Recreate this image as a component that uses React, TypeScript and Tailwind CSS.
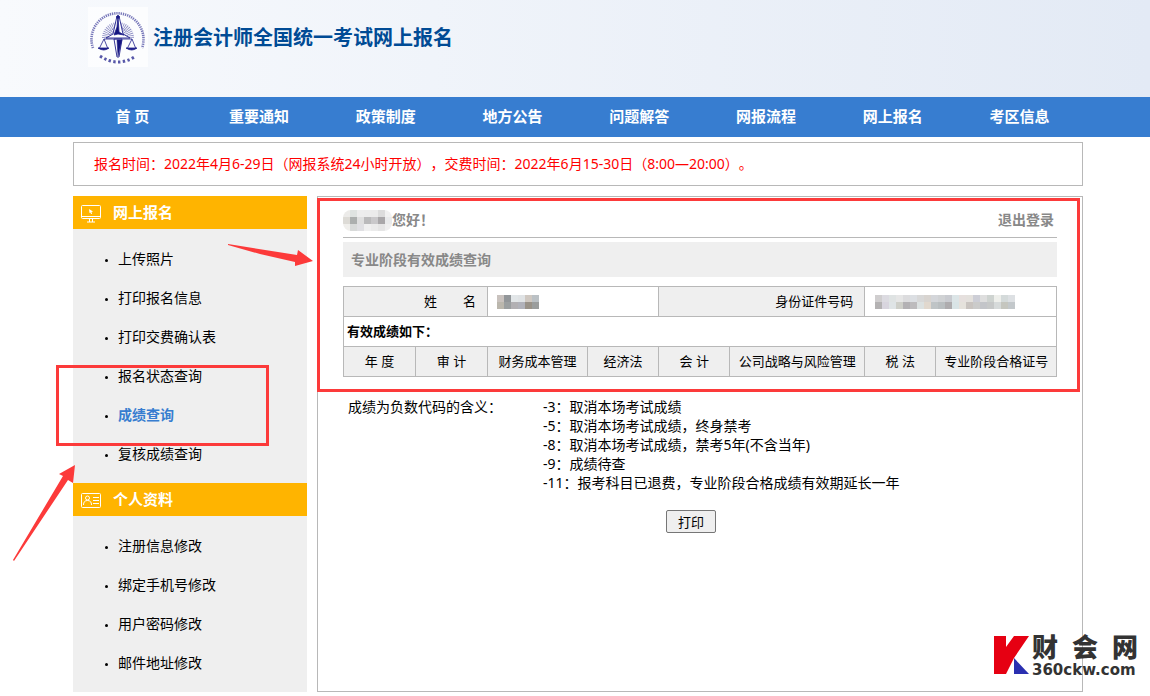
import type { ReactNode } from "react";

const navItems = ["首 页", "重要通知", "政策制度", "地方公告", "问题解答", "网报流程", "网上报名", "考区信息"];

const signUpLinks = ["上传照片", "打印报名信息", "打印交费确认表", "报名状态查询", "成绩查询", "复核成绩查询"];

const profileLinks = ["注册信息修改", "绑定手机号修改", "用户密码修改", "邮件地址修改"];

const subjects = ["年 度", "审 计", "财务成本管理", "经济法", "会 计", "公司战略与风险管理", "税 法", "专业阶段合格证号"];

const scoreCodes = [
  "-3：取消本场考试成绩",
  "-5：取消本场考试成绩，终身禁考",
  "-8：取消本场考试成绩，禁考5年(不含当年)",
  "-9：成绩待查",
  "-11：报考科目已退费，专业阶段合格成绩有效期延长一年",
];

const greetingMosaic = [
  ["#ecebe9", "#dfe3e1", "#ededed", "#ececec", "#ebebeb", "#dcdcdc", "#f1f1f1"],
  ["#dddbd6", "#acafae", "#dfdfdf", "#bababb", "#c9c8ca", "#a9a7a9", "#e9eaeb"],
  ["#f0efec", "#d8dad9", "#e0e0e3", "#f0f0f0", "#ebebeb", "#e5e5e5", "#efefef"],
];

const nameMosaic = [
  ["#c9c2be", "#929699", "#e2e6e8", "#e0e3e5", "#cfc8c1", "#bbc1c5"],
  ["#bbb7ad", "#9b9fa0", "#b2b0b3", "#b1b2ba", "#999288", "#9a9d9d"],
];

const idMosaic = [
  ["#d0cecf", "#dcdbe1", "#dfe3e3", "#e6e6e6", "#dcdcde", "#dcdfe3", "#d8d8d8", "#d8d4d0", "#d4d6da", "#d0d2d4", "#c9cbd0", "#dce5e7", "#e6e0de", "#e4e1dd", "#cdced6", "#dedede", "#ced3d0", "#eeefeb", "#d4dada", "#dde0e3"],
  ["#b4b2b3", "#d8d5de", "#dfe4e6", "#cecfc9", "#b3b1b4", "#bdbbbd", "#dce1e1", "#e1d8ce", "#bfc4c6", "#b9bec0", "#aeacae", "#d9e4e6", "#e5e2dc", "#c9c4c0", "#cbcbca", "#c3c5c9", "#c6c8c8", "#d6dada", "#c5c6bf", "#c3c8cb"],
];

const Mosaic = ({ rows, label, className = "" }: { rows: string[][]; label: string; className?: string }) => (
  <svg
    role="img"
    aria-label={label}
    width={rows[0].length * 7}
    height={rows.length * 7}
    shapeRendering="crispEdges"
    className={`shrink-0 ${className}`}
  >
    {rows.map((row, y) =>
      row.map((fill, x) => <rect key={`${x}-${y}`} x={x * 7} y={y * 7} width="7" height="7" fill={fill} />)
    )}
  </svg>
);

const Emblem = () => (
  <svg viewBox="0 0 60 60" className="size-[60px] shrink-0 bg-white/70" fill="none" stroke="#20208c">
    <path d="M5 41A26 26 0 1 1 54 41" strokeWidth="2.600" strokeDasharray="1.3 .9" opacity=".6" />
    <path d="M12 49Q30 61 48 49" strokeWidth="3" strokeDasharray="2.4 2.4" opacity=".75" />
    <path d="M17 31A13 13 0 0 1 43 31" strokeWidth="6" strokeDasharray=".8 1" opacity=".5" />
    <path d="M22 30A8 8 0 0 1 38 30" strokeWidth="4" strokeDasharray=".8 1" opacity=".5" />
    <path d="M29 9 25 27 18 31H42L35 27 31 9Z" fill="#fff" strokeWidth=".9" />
    <path d="M30 9 31 25 36 28 30 27 26 28 29 20Z" fill="#14147e" strokeWidth=".8" />
    <path d="M26 32 29 50 31 50 34 32Z" fill="#fff" strokeWidth=".9" />
    <path d="M29 33H34L30 49Z" fill="#14147e" strokeWidth=".6" />
    <circle cx="30" cy="10" r="1.300" fill="#14147e" />
    <path d="M16 32H44M16 32 11 42M16 32 20 42M44 32 39 42M44 32 48 42" strokeWidth=".8" />
    <path d="M10 41H21Q16 45 10 41ZM38 41H49Q44 45 38 41Z" fill="#20208c" strokeWidth=".8" />
  </svg>
);

const MonitorIcon = () => (
  <svg viewBox="0 0 20 18" className="mt-[2px] h-[18px] w-5" fill="none" stroke="#fff">
    <rect x=".5" y=".5" width="19" height="13" rx="1" />
    <path d="M1 11.5H19M8.500 14V17M11.500 14V17M6 17H14" />
    <path d="M8 4 12 6.500 10.500 7 11 9 10 9 9.500 7.500 8.500 8Z" fill="#fff" stroke="none" />
  </svg>
);

const CardIcon = () => (
  <svg viewBox="0 0 20 18" className="h-[18px] w-5" fill="none" stroke="#fff">
    <rect x=".5" y="2.500" width="19" height="14" rx="1" />
    <circle cx="6.500" cy="7" r="2" />
    <path d="M2.500 14Q2.500 9.500 6.500 9.500Q10.500 9.500 10.500 14M12 6.500H18M12 9.500H18M12 12.500H18" />
  </svg>
);

interface MenuProps {
  title: string;
  icon: ReactNode;
  links: string[];
  active?: string;
}

const Menu = ({ title, icon, links, active }: MenuProps) => (
  <section>
    <h2 className="flex h-[33px] items-center gap-3 bg-[#ffb400] pl-2 text-[15px] font-bold text-white">
      {icon}
      {title}
    </h2>
    <ul className="py-[10px] pl-8">
      {links.map((link) => (
        <li key={link} className="flex h-[39px] items-center gap-[10px]">
          <span className="mt-1 size-[3px] rounded-full bg-black" />
          <a href="#" className={link === active ? "font-bold text-[#377dd0]" : "hover:text-[#377dd0]"}>
            {link}
          </a>
        </li>
      ))}
    </ul>
  </section>
);

const ScoreTable = () => (
  <table className="mt-[9px] w-full table-fixed border-collapse text-[13px] [&_td]:border [&_td]:border-[#b8b8b8] [&_th]:border [&_th]:border-[#b8b8b8] [&_th]:font-normal">
    <colgroup>
      <col className="w-[10.1%]" />
      <col className="w-[10.1%]" />
      <col className="w-[14%]" />
      <col className="w-[10%]" />
      <col className="w-[10%]" />
      <col className="w-[18.9%]" />
      <col className="w-[10%]" />
      <col />
    </colgroup>
    <tbody>
      <tr className="h-[30px]">
        <th colSpan={2} className="bg-[#efefef] pr-[11px]">
          <span className="flex justify-end gap-[26px]">
            <span>姓</span>
            <span>名</span>
          </span>
        </th>
        <td colSpan={2} className="pl-[9px]">
          <Mosaic rows={nameMosaic} label="姓名" />
        </td>
        <th colSpan={2} className="bg-[#efefef] pr-[11px] text-right">
          身份证件号码
        </th>
        <td colSpan={2} className="pl-[10px]">
          <Mosaic rows={idMosaic} label="身份证件号码" />
        </td>
      </tr>
      <tr className="h-[30px]">
        <td colSpan={8} className="pl-[3px] font-bold">
          有效成绩如下：
        </td>
      </tr>
      <tr className="h-[30px] bg-[#efefef]">
        {subjects.map((subject) => (
          <th key={subject} className="whitespace-nowrap">
            {subject}
          </th>
        ))}
      </tr>
    </tbody>
  </table>
);

const SiteMark = () => (
  <div className="absolute top-[634px] right-3 flex items-start gap-[2px] text-[#333]">
    <svg viewBox="0 0 36 38" className="mt-[2px] h-[38px] w-9">
      <path d="M0 0H12V11L20 0H35L20 22 12 38H0Z" fill="#e60012" />
      <path d="M20 22 35 38H20Z" fill="#2a2fb0" />
    </svg>
    <div className="min-w-[106px] font-['Liberation_Sans','Noto_Sans_CJK_SC',sans-serif]">
      <div className="flex justify-between text-[26px] leading-[28px] font-black">
        <span>财</span>
        <span>会</span>
        <span>网</span>
      </div>
      <div className="font-['DejaVu_Sans',sans-serif] text-[15px] leading-4 font-bold">360ckw.com</div>
    </div>
  </div>
);

const App = () => {
  return (
    <div
      lang="zh-CN"
      className="relative min-h-screen bg-white pb-1 font-['Noto_Sans','Noto_Sans_CJK_SC',sans-serif] text-sm text-black [text-spacing-trim:space-all]"
    >
      <header className="flex h-[97px] items-start gap-[5px] bg-linear-to-r from-[#f8fafd] to-[#e3eaf5] pt-[7px] pl-[88px]">
        <Emblem />
        <h1 className="text-xl leading-[62px] font-bold text-[#004b95]">注册会计师全国统一考试网上报名</h1>
      </header>

      <nav className="flex h-10 items-center bg-[#377dd0] pr-[67px] pl-[69px] text-[15px] font-bold text-white">
        {navItems.map((item) => (
          <a key={item} href="#" className="flex-1 text-center">
            {item}
          </a>
        ))}
      </nav>

      <div className="pt-[5px] pr-[67px] pl-[73px]">
        <p className="flex h-11 items-center border border-[#b8b8b8] pl-5 text-[#f00]">
          报名时间：2022年4月6-29日（网报系统24小时开放），交费时间：2022年6月15-30日（8:00—20:00）。
        </p>

        <div className="mt-[10px] flex gap-[10px]">
          <aside className="w-[234px] shrink-0 bg-[#efefef]">
            <Menu title="网上报名" icon={<MonitorIcon />} links={signUpLinks} active="成绩查询" />
            <Menu title="个人资料" icon={<CardIcon />} links={profileLinks} />
          </aside>

          <main className="min-w-0 flex-1 border border-[#b8b8b8] px-[25px]">
            <div className="flex h-[41px] items-center justify-between border-b border-[#b8b8b8] pt-[6px] pr-[3px] font-bold text-[#888]">
              <span className="flex items-center">
                <Mosaic rows={greetingMosaic} label="用户" className="rounded-lg" />
                您好！
              </span>
              <a href="#">退出登录</a>
            </div>
            <h2 className="mt-1 flex h-[35px] items-center bg-[#efefef] pl-2 font-bold text-[#888]">
              专业阶段有效成绩查询
            </h2>
            <ScoreTable />

            <div className="mt-5 flex gap-[35px] pl-[5px] leading-[19px]">
              <p className="w-[160px]">成绩为负数代码的含义：</p>
              <ul>
                {scoreCodes.map((code) => (
                  <li key={code}>{code}</li>
                ))}
              </ul>
            </div>
            <div className="mt-[18px] pr-[18px] text-center">
              <button
                type="button"
                className="h-[23px] w-[50px] rounded-[2px] border border-[#767676] bg-[#efefef] text-[13px] leading-5"
              >
                打印
              </button>
            </div>
          </main>
        </div>
      </div>

      <div className="pointer-events-none absolute top-[198px] right-[70px] left-[317px] h-[194px] border-3 border-[#fc3a3a]" />
      <div className="pointer-events-none absolute top-[365px] left-[56px] h-[81px] w-[213px] border-3 border-[#fc3a3a]" />
      <svg className="pointer-events-none absolute top-[240px] left-0 h-[325px] w-[320px]" fill="#fc3a3a">
        <path d="M228 4 297 15 298 10 313 21 295 26 295 22 260 14 228 5Z" />
        <path d="M13 320 63 236 59 234 75 225 73 243 68 240 14 321Z" />
      </svg>
      <SiteMark />
    </div>
  );
};

export default App;
